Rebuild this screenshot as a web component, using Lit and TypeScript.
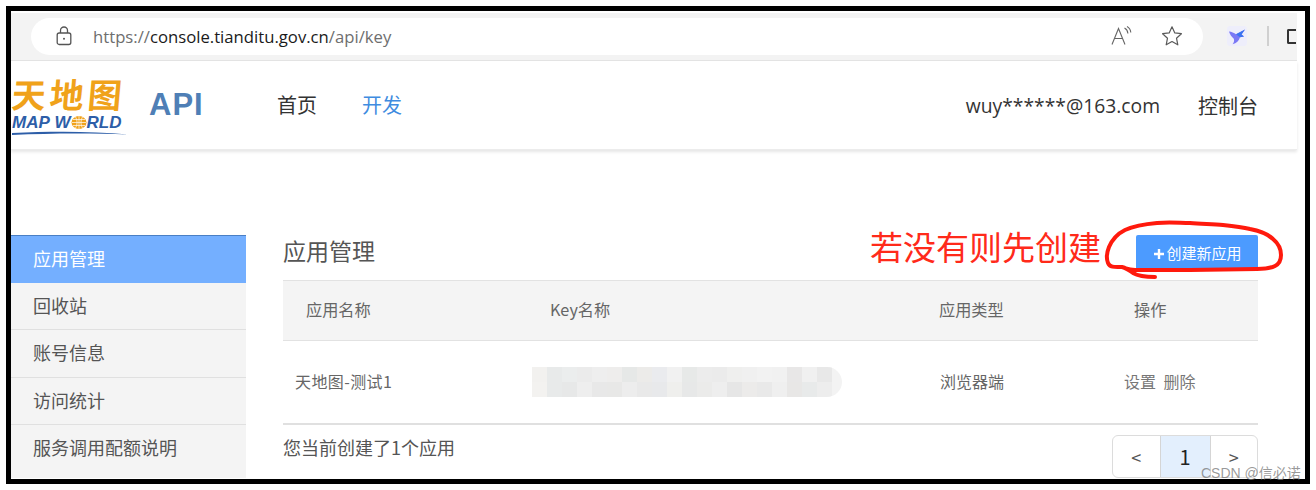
import { LitElement, html, css, svg, unsafeCSS } from "lit";
import { customElement } from "lit/decorators.js";

const CJK = unsafeCSS(`"Noto Sans CJK SC", sans-serif`);
const blurTop = ["#f2f1ef","#e8eaea","#ebeded","#ebebeb","#eeeeee","#eeedec","#e6e8e7","#ecebe9","#eaebee","#f1f1f1","#e7e9e8","#ececec","#ebebeb","#efefee","#f0f0f0","#f2f2f2","#f1f1f1","#e8e7e7","#f0f0f0","#e8e8e8"];
const blurBot = ["#f3f2f0","#e8eaea","#e7e8e8","#eeeeee","#e8e8e8","#e8e8e7","#ededed","#e9e9e9","#e8e9eb","#efefed","#e7e8e8","#ebebea","#eeeeee","#e6e6e6","#ecebea","#e9e9e9","#efefef","#e8e7e6","#e8eaea","#ededed"];

@customElement("app-root")
export class AppRoot extends LitElement {
  static styles = css`
    :host { display: block; width: 1316px; height: 490px; background: #fff; overflow: hidden; position: relative; font-family: ${CJK}; }
    .frame { box-sizing: border-box; position: absolute; left: 6px; top: 6px; width: 1304px; height: 478px; border: 5px solid #000; background: #fff; overflow: hidden; }
    .inner { width: 1286px; display: flex; flex-direction: column; padding-top: 2px; }
    .chrome { height: 48px; background: #f3f3f3; border-bottom: 1px solid #e4e4e4; box-sizing: border-box; display: flex; align-items: center; padding: 0 0 1px 20px; }
    .omni { width: 1172px; height: 37px; background: #fff; border-radius: 19px; display: flex; align-items: center; box-sizing: border-box; padding: 0 20px 0 25px; font-family: "Open Sans", sans-serif; font-size: 16.7px; color: #6e6e6e; }
    .omni .lock { width: 16px; height: 20px; margin-right: 21px; }
    .omni b { font-weight: 400; color: #1a1a1a; }
    .omni .url { flex: 1; }
    .omni .aa { width: 22px; height: 22px; margin-right: 28px; }
    .omni .star { width: 22px; height: 22px; }
    .ext { width: 20px; height: 20px; margin-left: 24px; }
    .sep { width: 2px; height: 20px; background: #d0d0d0; margin-left: 20px; }
    .win { width: 9px; height: 15px; border: 2px solid #333; border-right: 0; margin-left: 18px; box-sizing: border-box; border-radius: 2px 0 0 2px; }
    .nav { height: 89px; display: flex; align-items: center; box-shadow: 0 2px 3px rgba(0,0,0,.1); border-bottom: 1px solid #ececec; position: relative; padding-bottom: 1px; box-sizing: border-box; }
    .logo { width: 116px; height: 62px; flex: none; display: flex; flex-direction: column; margin-left: 1px; }
    .cn { font-size: 34px; line-height: 40px; font-weight: 700; color: #f0a21a; white-space: nowrap; letter-spacing: 4px; transform: skewX(-5deg); font-family: "Noto Sans CJK SC", serif; }
    .en { font: italic 900 17px/17px "Liberation Sans", sans-serif; color: #2d5ea8; white-space: nowrap; display: flex; align-items: center; }
    .en svg { width: 16px; height: 15px; flex: none; }
    .curve { width: 116px; height: 4px; display: block; }
    .api { font: 700 31px "Liberation Sans", sans-serif; color: #4f7fb6; margin-left: 21px; letter-spacing: 1px; width: 78px; }
    .menu { font-size: 20px; color: #333; margin-left: 50px; }
    .menu.on { color: #3f8ce0; margin-left: 45px; }
    .right { margin-left: auto; margin-right: 39px; display: flex; align-items: center; gap: 38px; font-size: 20px; color: #333; padding-top: 1px; }
    .right .mail { font-family: "Open Sans", ${CJK}; font-size: 19.3px; padding-top: 1px; }
    .body { display: flex; padding-top: 85px; }
    .side { width: 235px; flex: none; background: #f4f4f4; border-top: 1px solid #4a7fc4; display: flex; flex-direction: column; }
    .side div { height: 47.2px; line-height: 44px; box-sizing: border-box; padding-left: 22px; font-size: 18px; color: #555; border-bottom: 1px solid #e0e0e0; }
    .side div:last-child { border-bottom: 0; }
    .side div.on { background: #74afff; color: #fff; border-bottom: 0; }
    .main { width: 975px; margin-left: 37px; display: flex; flex-direction: column; }
    .head { height: 45px; display: flex; justify-content: space-between; align-items: flex-start; }
    .head h2 { margin: 0; font-weight: 400; font-size: 23px; color: #555; line-height: 31px; }
    .btn { width: 122px; height: 36px; background: #4c9bff; color: #fff; font-size: 15px; line-height: 36px; display: flex; align-items: flex-start; justify-content: center; padding-left: 2px; box-sizing: border-box; border-radius: 2px; }
    .btn svg { width: 10px; height: 10px; margin: 14px 2px 0 0; flex: none; }
    .row { display: grid; grid-template-columns: 245px 411px 195px 1fr; align-items: center; color: #666; font-size: 16.2px; }
    .row span { padding-bottom: 3px; }
    .th { height: 61px; background: #f4f4f4; border-top: 1px solid #e2e2e2; border-bottom: 1px solid #e2e2e2; box-sizing: border-box; }
    .tr { height: 84px; border-bottom: 2px solid #e0e0e0; box-sizing: border-box; }
    .th span:first-child { padding-left: 23px; }
    .th .k { padding-left: 22px; }
    .th .t { padding-left: 0; }
    .tr .n { padding-left: 12px; font-size: 16px; letter-spacing: .4px; }
    .tr .t { padding-left: 1px; font-size: 16px; }
    .tr .o { margin-left: -10px; font-size: 16px; color: #777; word-spacing: 4px; }
    .blur { width: 310px; height: 30px; display: grid; grid-template-rows: 1fr 1fr; border-radius: 0 15px 15px 0; overflow: hidden; background: #f3f3f3; margin-left: 4px; }
    .blur p { margin: 0; display: flex; }
    .blur i { width: 15px; display: block; flex: none; }
    .foot { display: flex; justify-content: space-between; align-items: flex-start; padding-top: 10px; font-size: 18px; color: #555; }
    .foot > span { line-height: 24px; }
    .pager { display: flex; height: 43px; width: 146px; border: 1px solid #dcdcdc; border-radius: 6px; box-sizing: border-box; }
    .pager span { flex: 1; display: flex; align-items: center; justify-content: center; color: #555; font-size: 18px; }
    .pager .cur { background: #e3effd; border-left: 1px solid #d5d5d5; border-right: 1px solid #d5d5d5; color: #222; font-size: 20px; flex: 0 0 49px; }
    .note { position: absolute; left: 870px; top: 222px; font-size: 33px; font-weight: 400; line-height: 48px; color: #ff2a1a; white-space: nowrap; }
    .ring { position: absolute; left: 0; top: 0; width: 1316px; height: 490px; pointer-events: none; }
    .mark { position: absolute; left: 1201px; top: 463px; font-size: 14px; line-height: 20px; color: rgba(120,120,120,.75); white-space: nowrap; font-family: "Liberation Sans", ${CJK}; }
  `;

  render() {
    return html`
      <div class="frame"><div class="inner">
        <div class="chrome">
          <div class="omni">
            <svg class="lock" viewBox="0 0 16 20" fill="none" stroke="#555" stroke-width="1.3"><rect x="1.2" y="7" width="13.6" height="11.5" rx="2"/><path d="M4.5 7V4.5a3.5 3.5 0 0 1 7 0V7"/><circle cx="8" cy="12.8" r="1" fill="#555" stroke="none"/></svg>
            <span class="url">https://<b>console.tianditu.gov.cn</b>/api/key</span>
            <svg class="aa" viewBox="0 0 22 22" fill="none" stroke="#666" stroke-width="1.1"><path d="M1 19.5 7.5 3.5 14 19.5M3.4 13.5h8.2"/><path d="M13.5 3c2 1 3.2 2.8 3.4 5.5M16 1.5c2.4 1.3 3.6 3.2 3.8 6"/></svg>
            <svg class="star" viewBox="0 0 22 22" fill="none" stroke="#5a5a5a" stroke-width="1.2" stroke-linejoin="round"><path d="M11 1.8l2.8 6.1 6.6.8-4.9 4.5 1.3 6.6L11 16.5 5.2 19.8l1.3-6.6L1.6 8.7l6.6-.8z"/></svg>
          </div>
          <svg class="ext" viewBox="0 0 20 20"><rect width="20" height="20" rx="3" fill="#eeeefb"/><path d="M2 5.5c2.5.3 5 1.2 7 2.8L18 3.5l-3.5 5 2.5 2-4 .7c-1 3.500-3.500 6-7.500 7 1.500-1.800 2-3.500 1.300-5.500C4.800 11.200 3 8.500 2 5.500z" fill="#7a78f5"/><path d="M9 8.300 18 3.500l-3.500 5 2.500 2-4 .7z" fill="#3b74f0"/></svg>
          <span class="sep"></span>
          <span class="win"></span>
        </div>
        <div class="nav">
          <div class="logo">
            <span class="cn">天地图</span>
            <span class="en">MAP&nbsp;W<svg viewBox="0 0 16 15"><ellipse cx="8" cy="7.500" rx="7.500" ry="6.500" fill="#f0a21a"/><path d="M1 7.500h14M8 1v13M4.500 2c2 3 2 8 0 11M11.500 2c-2 3-2 8 0 11M2 4.500h12M2 10.500h12" stroke="#fff" stroke-width=".7" fill="none"/></svg>RLD</span>
            <svg class="curve" viewBox="0 0 116 4"><path d="M0 2C40 0 80 0 116 3.500 80 2 40 2 0 4z" fill="#2d5ea8"/></svg>
          </div>
          <span class="api">API</span>
          <span class="menu">首页</span>
          <span class="menu on">开发</span>
          <div class="right"><span class="mail">wuy******@163.com</span><span>控制台</span></div>
        </div>
        <div class="body">
          <div class="side">
            <div class="on">应用管理</div><div>回收站</div><div>账号信息</div><div>访问统计</div><div>服务调用配额说明</div>
          </div>
          <div class="main">
            <div class="head"><h2>应用管理</h2><div class="btn"><svg viewBox="0 0 10 10"><path d="M5 0v10M0 5h10" stroke="#fff" stroke-width="2.400"/></svg>创建新应用</div></div>
            <div class="row th"><span>应用名称</span><span class="k">Key名称</span><span class="t">应用类型</span><span class="o">操作</span></div>
            <div class="row tr">
              <span class="n">天地图-测试1</span>
              <div class="blur">
                <p>${blurTop.map((c) => html`<i style="background:${c}"></i>`)}</p>
                <p>${blurBot.map((c) => html`<i style="background:${c}"></i>`)}</p>
              </div>
              <span class="t">浏览器端</span>
              <span class="o">设置 删除</span>
            </div>
            <div class="foot"><span>您当前创建了1个应用</span><div class="pager"><span>&lt;</span><span class="cur">1</span><span>&gt;</span></div></div>
          </div>
        </div>
      </div></div>
      <div class="note">若没有则先创建</div>
      <svg class="ring" viewBox="0 0 1316 490" fill="none" stroke="#ff1a0d" stroke-width="4" stroke-linecap="round" stroke-linejoin="round">
        ${svg`<path d="M1155 277C1146 277 1138 276 1133 273 1129 270 1126 268 1122 267 1116 267 1110 268 1108 263 1106 258 1107 252 1109 247 1112 240 1117 234 1125 230 1134 226 1146 224 1157 223 1170 222 1180 223 1190 223 1202 224 1213 224 1223 225 1233 226 1242 227 1250 229 1260 231 1268 234 1273 239 1279 244 1281 250 1281 255 1281 260 1279 264 1275 266 1269 269 1263 269 1257 269L1190 270 1140 270C1133 270 1127 269 1122 267"/>`}
      </svg>
      <div class="mark">CSDN @信必诺</div>
    `;
  }
}
